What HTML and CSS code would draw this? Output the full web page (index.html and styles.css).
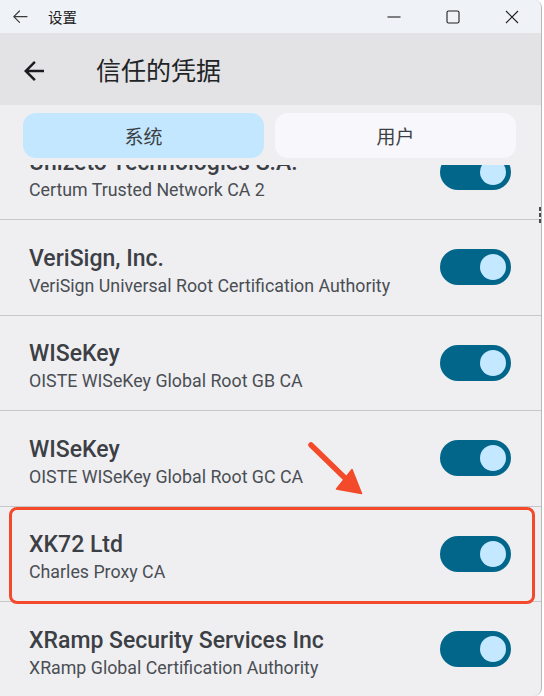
FILE: index.html
```html
<!DOCTYPE html>
<html lang="zh-CN">
<head>
<meta charset="utf-8">
<title>设置</title>
<link rel="stylesheet" href="styles.css">
</head>
<body>
<div class="window">
  <div class="titlebar">
    <svg class="tb-back" width="16" height="16" viewBox="0 0 16 16"><path d="M7.5 2 L1.8 7.7 L7.5 13.4 M1.8 7.7 H15" fill="none" stroke="#3a3a3a" stroke-width="1.2" stroke-linecap="round" stroke-linejoin="round"/></svg>
    <span class="tb-title">设置</span>
    <span class="tb-spacer"></span>
    <span class="tb-btn"><svg width="14" height="14" viewBox="0 0 14 14"><path d="M0.5 7 H13.5" stroke="#1f1f1f" stroke-width="1.1"/></svg></span>
    <span class="tb-btn"><svg width="14" height="14" viewBox="0 0 14 14"><rect x="1" y="1" width="12" height="12" rx="1.6" fill="none" stroke="#1f1f1f" stroke-width="1.1"/></svg></span>
    <span class="tb-btn"><svg width="14" height="14" viewBox="0 0 14 14"><path d="M1 1 L13 13 M13 1 L1 13" stroke="#1f1f1f" stroke-width="1.1"/></svg></span>
  </div>
  <div class="appbar">
    <svg class="ab-back" width="30" height="30" viewBox="0 0 24 24"><path d="M20 11H7.83l5.59-5.59L12 4l-8 8 8 8 1.41-1.41L7.83 13H20v-2z" fill="#1c1b1f"/></svg>
    <span class="ab-title">信任的凭据</span>
  </div>
  <div class="tabs">
    <div class="tab tab-active">系统</div>
    <div class="tab">用户</div>
  </div>
  <div class="list">
    <div class="list-inner">
      <div class="item">
        <div class="item-text"><div class="item-title">Unizeto Technologies S.A.</div><div class="item-sub">Certum Trusted Network CA 2</div></div>
        <div class="switch"><span class="thumb"></span></div>
      </div>
      <div class="item">
        <div class="item-text"><div class="item-title">VeriSign, Inc.</div><div class="item-sub">VeriSign Universal Root Certification Authority</div></div>
        <div class="switch"><span class="thumb"></span></div>
      </div>
      <div class="item">
        <div class="item-text"><div class="item-title">WISeKey</div><div class="item-sub">OISTE WISeKey Global Root GB CA</div></div>
        <div class="switch"><span class="thumb"></span></div>
      </div>
      <div class="item">
        <div class="item-text"><div class="item-title">WISeKey</div><div class="item-sub">OISTE WISeKey Global Root GC CA</div></div>
        <div class="switch"><span class="thumb"></span></div>
      </div>
      <div class="item item-marked">
        <div class="item-text"><div class="item-title">XK72 Ltd</div><div class="item-sub">Charles Proxy CA</div></div>
        <div class="switch"><span class="thumb"></span></div>
      </div>
      <div class="item">
        <div class="item-text"><div class="item-title">XRamp Security Services Inc</div><div class="item-sub">XRamp Global Certification Authority</div></div>
        <div class="switch"><span class="thumb"></span></div>
      </div>
    </div>
  </div>
  <svg class="annot-arrow" width="70" height="66" viewBox="0 0 70 66">
    <path d="M11 10 L46 44" stroke="#f24a2a" stroke-width="5.5" stroke-linecap="round"/>
    <path d="M61.5 58.5 L36.5 54 L52 34.5 Z" fill="#f24a2a" stroke="#f24a2a" stroke-width="1.5" stroke-linejoin="round"/>
  </svg>
  <span class="edge-mark"></span>
</div>
</body>
</html>
```
FILE: styles.css
```css
* { box-sizing: border-box; }

html, body {
  margin: 0;
  padding: 0;
  background: #ffffff;
}

body {
  font-family: Roboto, "Noto Sans CJK SC", sans-serif;
}

.window {
  position: relative;
  width: 542px;
  height: 696px;
  display: flex;
  flex-direction: column;
  background: #efeff2;
  border-right: 1px solid #b8b8bb;
  border-top-right-radius: 8px;
  border-bottom-right-radius: 8px;
  overflow: hidden;
}

/* Windows title bar */
.titlebar {
  height: 33px;
  flex: none;
  display: flex;
  align-items: center;
  background: #eff2f7;
}
.tb-back {
  margin-left: 12px;
}
.tb-title {
  margin-left: 20px;
  font-family: "Noto Sans CJK SC", sans-serif;
  font-size: 14.5px;
  color: #1b1b1b;
  line-height: 33px;
}
.tb-spacer { flex: 1; }
.tb-btn {
  width: 59px;
  height: 33px;
  display: flex;
  align-items: center;
  justify-content: center;
}

/* App bar */
.appbar {
  height: 72px;
  flex: none;
  display: flex;
  align-items: center;
  background: #e3e3e5;
}
.ab-back {
  margin-left: 19px;
  margin-top: 3px;
}
.ab-title {
  margin-left: 47px;
  font-family: "Noto Sans CJK SC", sans-serif;
  font-size: 25px;
  color: #222326;
  line-height: 30px;
}

/* Segmented tabs */
.tabs {
  flex: none;
  display: flex;
  gap: 11px;
  padding: 8px 25px 7px 23px;
  background: #efeff2;
  position: relative;
  z-index: 1;
}
.tab {
  flex: 1;
  height: 45px;
  border-radius: 13px;
  background: #f8f8fc;
  display: flex;
  align-items: center;
  justify-content: center;
  font-family: "Noto Sans CJK SC", sans-serif;
  font-size: 19px;
  color: #3c3f44;
}
.tab-active {
  background: #c2e7fe;
}

/* List */
.list {
  flex: 1;
  overflow: hidden;
  position: relative;
}
.list-inner {
  margin-top: -40.5px;
}
.item {
  position: relative;
  height: 95.5px;
  display: flex;
  align-items: center;
  padding: 0 30px 0 29px;
  border-bottom: 1px solid #c7c7ca;
}
.item-text {
  flex: 1;
  margin-top: 7.3px;
}
.item-title {
  font-size: 23px;
  font-weight: 500;
  line-height: 27px;
  color: #3c4045;
}
.item-sub {
  margin-top: 3px;
  font-size: 17.8px;
  line-height: 22px;
  color: #4a4e53;
}

.switch {
  width: 71px;
  height: 36px;
  border-radius: 18px;
  background: #02668b;
  display: flex;
  align-items: center;
  justify-content: flex-end;
  padding-right: 5px;
}
.thumb {
  width: 26px;
  height: 26px;
  border-radius: 50%;
  background: #c3e8ff;
}

/* Annotation */
.item-marked::after {
  content: "";
  position: absolute;
  top: 0.5px;
  left: 9px;
  right: 6px;
  bottom: -3px;
  border: 3px solid #f24a2a;
  border-radius: 8px;
  pointer-events: none;
}
.annot-arrow {
  position: absolute;
  left: 300px;
  top: 435px;
}
.edge-mark {
  position: absolute;
  right: -1px;
  top: 207px;
  width: 3px;
  height: 16px;
  background: repeating-linear-gradient(#4a4a4a 0 4px, transparent 4px 6px);
}
```
